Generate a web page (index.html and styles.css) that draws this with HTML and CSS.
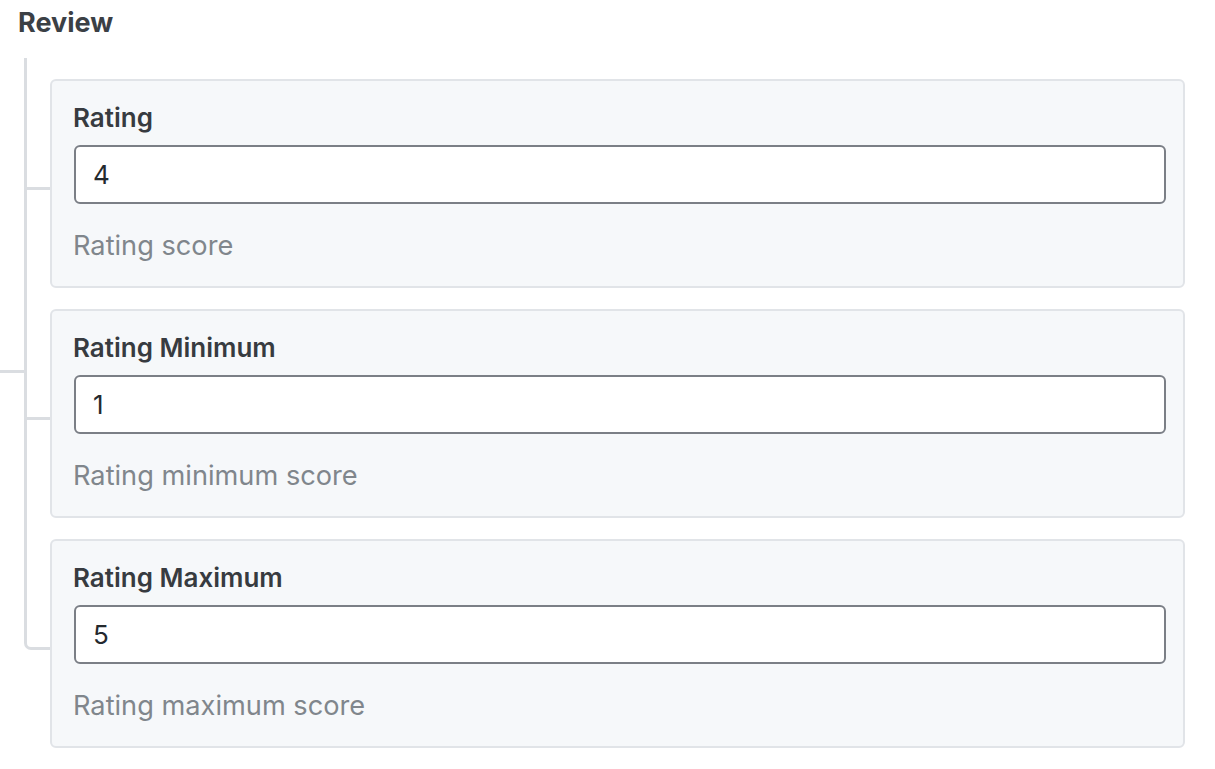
FILE: index.html
```html
<!DOCTYPE html>
<html lang="en">
<head>
<meta charset="utf-8">
<title>Review</title>
<link rel="stylesheet" href="styles.css">
</head>
<body>
  <h2 class="group-title">Review</h2>
  <div class="group">
    <div class="stub"><div class="stub-line"></div></div>
    <div class="tree">
      <div class="node">
        <div class="connector"><div class="seg-top"></div><div class="seg-bottom"></div></div>
        <div class="card">
          <label class="field-label" for="rating">Rating</label>
          <input class="field-input" id="rating" type="text" value="4">
          <div class="field-help">Rating score</div>
        </div>
      </div>
      <div class="node">
        <div class="connector"><div class="seg-top"></div><div class="seg-bottom"></div></div>
        <div class="card">
          <label class="field-label" for="rating-min">Rating Minimum</label>
          <input class="field-input" id="rating-min" type="text" value="1">
          <div class="field-help">Rating minimum score</div>
        </div>
      </div>
      <div class="node node-last">
        <div class="connector"><div class="seg-top"></div><div class="seg-bottom"></div></div>
        <div class="card">
          <label class="field-label" for="rating-max">Rating Maximum</label>
          <input class="field-input" id="rating-max" type="text" value="5">
          <div class="field-help">Rating maximum score</div>
        </div>
      </div>
    </div>
  </div>
</body>
</html>
```

FILE: styles.css
```css
* { box-sizing: border-box; }

html, body {
  margin: 0;
  padding: 0;
  background: #ffffff;
}

body {
  font-family: Inter, "Noto Sans", "Liberation Sans", sans-serif;
  color: #24292e;
}

.group-title {
  margin: 0;
  padding: 6px 0 0 18px;
  height: 58px;
  font-size: 27px;
  line-height: 34px;
  font-weight: 700;
  color: #3b4045;
}

.group {
  display: flex;
}

.stub {
  width: 24px;
  flex: none;
}

.stub-line {
  margin-top: 312px;
  height: 3px;
  background: #dadde1;
}

.tree {
  flex: 1;
  display: flex;
  flex-direction: column;
}

.node {
  display: grid;
  grid-template-columns: 26px 1135px;
}

.connector {
  display: flex;
  flex-direction: column;
}

.seg-top {
  height: 132px;
  border-left: 3px solid #dadde1;
  border-bottom: 3px solid #dadde1;
}

.seg-bottom {
  flex: 1;
  border-left: 3px solid #dadde1;
}

.node-last .seg-top {
  border-bottom-left-radius: 7px;
}

.node-last .seg-bottom {
  border-left: none;
}

.card {
  margin-top: 21px;
  height: 209px;
  background: #f6f8fa;
  border: 2px solid #e1e4e8;
  border-radius: 6px;
  padding: 21px 17px 0 22px;
  display: flex;
  flex-direction: column;
}

.field-label {
  display: block;
  margin-left: -1px;
  font-size: 26px;
  line-height: 32px;
  font-weight: 600;
  color: #373b40;
}

.field-input {
  display: block;
  margin-top: 11px;
  width: 100%;
  height: 59px;
  padding: 0 17px;
  border: 2px solid #7b7f86;
  border-radius: 6px;
  background: #ffffff;
  font-family: inherit;
  font-size: 26px;
  color: #24292e;
  outline: none;
}

.field-help {
  margin-left: -1px;
  margin-top: 25px;
  font-size: 27.2px;
  line-height: 34px;
  color: #80868c;
}
```
